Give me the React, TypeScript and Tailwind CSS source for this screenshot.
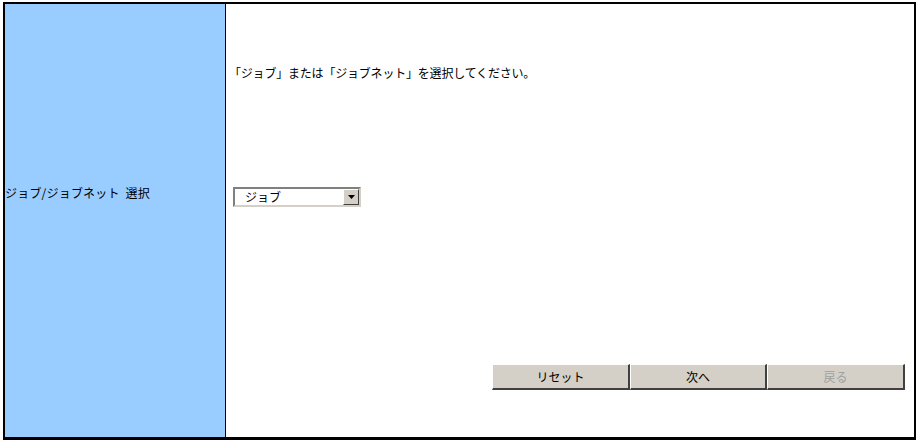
const font = "font-['MS_PGothic','Noto_Sans_CJK_JP',sans-serif]";

function ClassicButton({ label, disabled, wide }: { label: string; disabled?: boolean; wide?: boolean }) {
  return (
    <button
      className={`${wide ? "w-[138px]" : "w-[137px]"} h-[26px] bg-[#d4d0c8] border-t border-l border-t-white border-l-white border-r-2 border-b-2 border-r-[#404040] border-b-[#404040] text-[12px] leading-none ${
        disabled ? "text-[#a0a0a0]" : "text-black"
      }`}
      disabled={disabled}
    >
      {label}
    </button>
  );
}

export default function App() {
  return (
    <div className={`pl-[3px] pt-[2px] bg-white w-[919px] h-[442px] ${font}`}>
      <div className="w-[913px] h-[438px] border-black border-t-2 border-l-2 border-r-2 border-b-[3px] flex">
        {/* left label cell */}
        <div className="w-[221px] shrink-0 bg-[#99ccff] border-r border-black pt-[175px]">
          <span className="text-[12px] leading-4 text-black tracking-[0.2px]">ジョブ/ジョブネット&nbsp;&nbsp;選択</span>
        </div>

        {/* right content cell */}
        <div className="flex-1 flex flex-col pl-[3px] pt-[61px]">
          <p className="text-[12px] leading-4 text-black tracking-[-0.2px]">「ジョブ」または「ジョブネット」を選択してください。</p>

          <div className="mt-[106px] ml-[4px] w-[128px] h-[20px] flex bg-white border-2 border-t-[#808080] border-l-[#808080] border-r-[#d4d0c8] border-b-[#d4d0c8]">
            <div className="flex-1 flex items-center pl-[10px] text-[12px] leading-none text-black">ジョブ</div>
            <div className="w-[16px] h-full bg-[#d4d0c8] border border-t-white border-l-white border-r-[#404040] border-b-[#404040] flex items-center justify-center">
              <svg width="7" height="4" viewBox="0 0 7 4">
                <path d="M0 0h7L3.5 4z" fill="#000" />
              </svg>
            </div>
          </div>

          <div className="mt-[157px] flex justify-end pr-[9px]">
            <ClassicButton label="リセット" wide />
            <ClassicButton label="次へ" />
            <ClassicButton label="戻る" disabled wide />
          </div>
        </div>
      </div>
    </div>
  );
}
